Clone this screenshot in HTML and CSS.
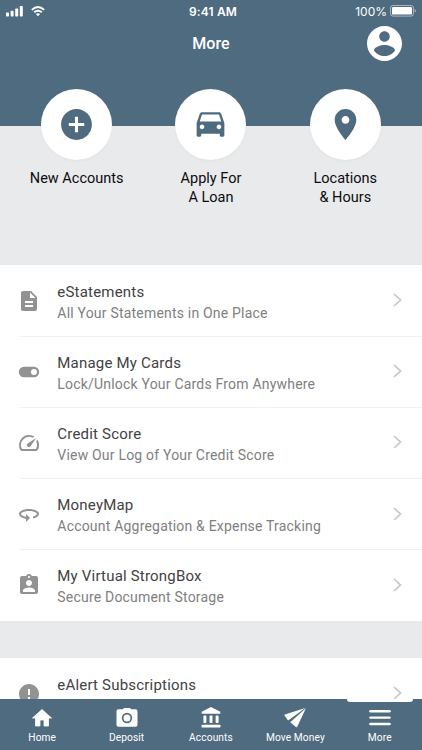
FILE: index.html
```html
<!DOCTYPE html>
<html lang="en">
<head>
<meta charset="utf-8">
<title>More</title>
<link rel="stylesheet" href="styles.css">
</head>
<body>
<div class="app">
  <header class="header">
    <div class="status">
      <div class="status-left">
        <svg width="17" height="11" viewBox="0 0 17 11"><rect x="0" y="6.5" width="3" height="4" rx=".7"/><rect x="4.6" y="4.7" width="3" height="5.8" rx=".7"/><rect x="9.2" y="2.4" width="3" height="8.1" rx=".7"/><rect x="13.8" y="0" width="3" height="10.5" rx=".7"/></svg>
        <svg width="14" height="11" viewBox="0 0 14 11"><g class="waves"><path d="M.8 3.9Q7-1.8 13.2 3.9"/><path d="M3.2 6.3Q7 3 10.8 6.3"/></g><path d="M4.9 8.1Q7 6.5 9.1 8.1L7 10.3z"/></svg>
      </div>
      <div class="clock">9:41 AM</div>
      <div class="status-right">
        <span>100%</span>
        <svg width="27" height="12" viewBox="0 0 27 12"><rect class="battery-shell" x=".5" y=".5" width="23" height="10.6" rx="2.5"/><rect x="2" y="2" width="20" height="7.6" rx="1.2"/><path class="battery-tip" d="M24.6 4c1.8.4 1.8 3.2 0 3.6z"/></svg>
      </div>
    </div>
    <h1 class="title">More</h1>
    <svg class="avatar" viewBox="2 2 20 20"><path d="M12 2C6.48 2 2 6.48 2 12s4.48 10 10 10 10-4.48 10-10S17.52 2 12 2zm0 3c1.66 0 3 1.34 3 3s-1.34 3-3 3-3-1.34-3-3 1.34-3 3-3zm0 14.2c-2.5 0-4.71-1.28-6-3.22.03-1.99 4-3.08 6-3.08 1.99 0 5.97 1.09 6 3.08-1.29 1.94-3.5 3.22-6 3.22z"/></svg>
  </header>

  <nav class="quick">
    <a class="quick-item"><span class="circle"><svg viewBox="0 0 24 24"><path d="M12 2C6.48 2 2 6.48 2 12s4.48 10 10 10 10-4.48 10-10S17.52 2 12 2zm5 11h-4v4h-2v-4H7v-2h4V7h2v4h4v2z"/></svg></span><span>New Accounts</span></a>
    <a class="quick-item"><span class="circle"><svg viewBox="0 0 24 24"><path d="M18.92 5.01C18.72 4.42 18.16 4 17.5 4h-11c-.66 0-1.21.42-1.42 1.01L3 11v8c0 .55.45 1 1 1h1c.55 0 1-.45 1-1v-1h12v1c0 .55.45 1 1 1h1c.55 0 1-.45 1-1v-8l-2.08-5.99zM6.5 15c-.83 0-1.5-.67-1.5-1.5S5.67 12 6.5 12s1.5.67 1.5 1.5S7.33 15 6.5 15zm11 0c-.83 0-1.5-.67-1.5-1.5s.67-1.5 1.5-1.5 1.5.67 1.5 1.5-.67 1.5-1.5 1.5zM5 10l1.5-4.5h11L19 10H5z"/></svg></span><span>Apply For<br>A Loan</span></a>
    <a class="quick-item"><span class="circle"><svg viewBox="0 0 24 24"><path d="M12 2C8.13 2 5 5.13 5 9c0 5.25 7 13 7 13s7-7.75 7-13c0-3.87-3.13-7-7-7zm0 9.5c-1.38 0-2.5-1.12-2.5-2.5s1.12-2.5 2.5-2.5 2.5 1.12 2.5 2.5-1.12 2.5-2.5 2.5z"/></svg></span><span>Locations<br>&amp; Hours</span></a>
  </nav>

  <main class="lists">
    <section class="list">
      <div class="row">
        <svg class="icon" viewBox="0 0 24 24"><path d="M14 2H6c-1.1 0-2 .9-2 2v16c0 1.1.89 2 1.99 2H18c1.1 0 2-.9 2-2V8l-6-6zm2 16H8v-2h8v2zm0-4H8v-2h8v2zm-3-5V3.5L18.5 9H13z"/></svg>
        <div class="text"><div class="name">eStatements</div><div class="desc">All Your Statements in One Place</div></div>
        <svg class="chevron" viewBox="0 0 9 14"><path d="M1 1l6.5 6L1 13"/></svg>
      </div>
      <div class="row">
        <svg class="icon" viewBox="0 0 24 24"><path d="M17 6.8H7a5.2 5.2 0 0 0 0 10.4h10a5.2 5.2 0 0 0 0-10.4zm0 8.2a3 3 0 1 1 0-6 3 3 0 0 1 0 6z"/></svg>
        <div class="text"><div class="name">Manage My Cards</div><div class="desc">Lock/Unlock Your Cards From Anywhere</div></div>
        <svg class="chevron" viewBox="0 0 9 14"><path d="M1 1l6.5 6L1 13"/></svg>
      </div>
      <div class="row">
        <svg class="icon" viewBox="0 0 24 24"><path d="M20.38 8.57l-1.23 1.85a8 8 0 0 1-.22 7.58H5.07A8 8 0 0 1 15.58 6.85l1.85-1.23A10 10 0 0 0 3.35 19a2 2 0 0 0 1.72 1h13.85a2 2 0 0 0 1.74-1 10 10 0 0 0-.27-10.44zM10.59 15.41a2 2 0 0 0 2.83 0l5.66-8.49-8.49 5.66a2 2 0 0 0 0 2.83z"/></svg>
        <div class="text"><div class="name">Credit Score</div><div class="desc">View Our Log of Your Credit Score</div></div>
        <svg class="chevron" viewBox="0 0 9 14"><path d="M1 1l6.5 6L1 13"/></svg>
      </div>
      <div class="row">
        <svg class="icon" viewBox="0 0 24 24"><path d="M12 7C6.48 7 2 9.24 2 12c0 2.24 2.94 4.13 7 4.77V20l4-4-4-4v2.73c-3.15-.56-5-1.9-5-2.73 0-1.06 3.04-3 8-3s8 1.94 8 3c0 .73-1.46 1.89-4 2.53v2.05c3.53-.77 6-2.53 6-4.58 0-2.76-4.48-5-10-5z"/></svg>
        <div class="text"><div class="name">MoneyMap</div><div class="desc">Account Aggregation &amp; Expense Tracking</div></div>
        <svg class="chevron" viewBox="0 0 9 14"><path d="M1 1l6.5 6L1 13"/></svg>
      </div>
      <div class="row">
        <svg class="icon" viewBox="0 0 24 24"><path d="M19 3h-4.18C14.4 1.84 13.3 1 12 1c-1.3 0-2.4.84-2.82 2H5c-1.1 0-2 .9-2 2v14c0 1.1.9 2 2 2h14c1.1 0 2-.9 2-2V5c0-1.1-.9-2-2-2zm-7 0c.55 0 1 .45 1 1s-.45 1-1 1-1-.45-1-1 .45-1 1-1zm0 4c1.66 0 3 1.34 3 3s-1.34 3-3 3-3-1.34-3-3 1.34-3 3-3zm6 12H6v-1.4c0-2 4-3.1 6-3.1s6 1.1 6 3.1V19z"/></svg>
        <div class="text"><div class="name">My Virtual StrongBox</div><div class="desc">Secure Document Storage</div></div>
        <svg class="chevron" viewBox="0 0 9 14"><path d="M1 1l6.5 6L1 13"/></svg>
      </div>
    </section>
    <section class="list">
      <div class="row">
        <svg class="icon" viewBox="0 0 24 24"><path d="M12 2C6.48 2 2 6.48 2 12s4.48 10 10 10 10-4.48 10-10S17.52 2 12 2zm1 15h-2v-2h2v2zm0-4h-2V7h2v6z"/></svg>
        <div class="text"><div class="name">eAlert Subscriptions</div><div class="desc">&nbsp;</div></div>
        <svg class="chevron" viewBox="0 0 9 14"><path d="M1 1l6.5 6L1 13"/></svg>
      </div>
    </section>
  </main>

  <nav class="tabs">
    <a class="tab"><svg viewBox="0 0 24 24"><path class="home" d="M10 20v-6h4v6h4.5v-8h3L12 3.500 2.500 12h3v8z"/></svg><span>Home</span></a>
    <a class="tab"><svg viewBox="0 0 24 24"><path fill-rule="evenodd" d="M9 2L7.800 3.200H3.500c-1.100 0-2 .900-2 2v13.600c0 1.100.900 2 2 2h17c1.100 0 2-.900 2-2V5.200c0-1.100-.900-2-2-2h-4.300L15 2H9zM12 6.800a5.200 5.200 0 1 0 0 10.400 5.200 5.200 0 0 0 0-10.400zM12 8.500a3.500 3.500 0 1 1 0 7 3.500 3.500 0 0 1 0-7z"/></svg><span>Deposit</span></a>
    <a class="tab"><svg viewBox="0 0 24 24"><path d="M12 1L2.700 5.800v2h18.600v-2z"/><rect x="4.400" y="9.600" width="3" height="7.400" rx="1"/><rect x="10.500" y="9.600" width="3" height="7.400" rx="1"/><rect x="16.600" y="9.600" width="3" height="7.400" rx="1"/><rect x="2.500" y="18.800" width="19" height="2.800" rx=".8"/></svg><span>Accounts</span></a>
    <a class="tab"><svg viewBox="0 0 24 24"><path d="M22.300 1.900L1.900 8.400c-.6.200-.7.700-.4 1.200l3.600 4.800zM22.900 2.300L14.200 20.800c-.3.600-.9.600-1.300.100l-5.700-4.700z"/></svg><span>Move Money</span></a>
    <a class="tab tab-active"><svg viewBox="0 0 24 24"><rect x="1.200" y="4" width="21.600" height="2.400" rx="1.200"/><rect x="1.200" y="10.400" width="21.600" height="2.400" rx="1.200"/><rect x="1.200" y="16.800" width="21.600" height="2.400" rx="1.200"/></svg><span>More</span></a>
  </nav>
</div>
</body>
</html>
```

FILE: styles.css
```css
* { box-sizing: border-box; }
body { margin: 0; font-family: Roboto, sans-serif; }
.app {
  width: 422px;
  height: 750px;
  overflow: hidden;
  display: flex;
  flex-direction: column;
  background: #e9eaec;
}
svg { display: block; flex: none; }

.header {
  position: relative;
  flex: none;
  height: 125.5px;
  background: #4f6b80;
  color: #fff;
  fill: #fff;
}
.status {
  display: grid;
  grid-template-columns: 1fr auto 1fr;
  align-items: center;
  height: 22px;
  padding: 0 5px 0 6px;
  font-family: Inter, sans-serif;
  font-size: 12px;
}
.status-left { display: flex; gap: 8px; }
.waves { fill: none; stroke: #fff; stroke-width: 1.9; }
.clock { font-weight: 600; letter-spacing: .15px; padding-left: 3px; }
.status-right { display: flex; justify-content: flex-end; align-items: center; gap: 3px; }
.battery-shell { fill: none; stroke: #fff; opacity: .5; }
.battery-tip { opacity: .5; }
.title {
  margin: 12px 0 0;
  text-align: center;
  font-size: 16px;
  line-height: 20px;
  font-weight: 500;
  letter-spacing: .1px;
}
.avatar { position: absolute; right: 20px; top: 25.5px; width: 35px; height: 35px; }

.quick {
  position: relative;
  flex: none;
  height: 176px;
  margin: -36.5px 9.5px 0;
  display: grid;
  grid-template-columns: repeat(3, 1fr);
  text-align: center;
  font-size: 14.5px;
  line-height: 19px;
  color: #0c0c0e;
}
.quick-item { display: flex; flex-direction: column; align-items: center; gap: 9px; }
.circle {
  width: 71px;
  height: 71px;
  border-radius: 50%;
  background: #fff;
  box-shadow: 0 1px 3px rgba(0, 0, 0, .04);
  display: flex;
  align-items: center;
  justify-content: center;
}
.circle svg { width: 37px; height: 37px; fill: #4f6b80; }

.lists { flex: 1; min-height: 0; display: flex; flex-direction: column; gap: 37px; }
.list { background: #fff; }
.row {
  position: relative;
  height: 71.2px;
  display: flex;
  align-items: center;
  padding: 0 20px 0 17px;
}
.row + .row::before {
  content: "";
  position: absolute;
  top: -.5px;
  left: 20px;
  right: 0;
  height: 1px;
  background: #f1f1f2;
}
.icon { width: 24px; height: 24px; fill: #929292; }
.text { flex: 1; margin-left: 16.3px; padding-top: 3px; white-space: nowrap; letter-spacing: .2px; }
.name { font-size: 15px; line-height: 22px; color: #424242; }
.desc { font-size: 14px; line-height: 21px; color: #808080; }
.chevron { width: 9px; height: 14px; margin-bottom: 1px; fill: none; stroke: #c5c5ca; stroke-width: 1.7; }

.tabs {
  position: relative;
  flex: none;
  height: 51px;
  background: #4f6b80;
  display: grid;
  grid-template-columns: repeat(5, 1fr);
  color: #fff;
  fill: #fff;
  font-size: 10.2px;
  line-height: 13px;
  letter-spacing: .1px;
}
.tab { position: relative; display: flex; flex-direction: column; align-items: center; gap: 1px; padding-top: 7px; }
.tab svg { width: 24px; height: 24px; }
.home { stroke: #fff; stroke-width: .8; stroke-linejoin: round; }
.tab-active::before {
  content: "";
  position: absolute;
  top: 0;
  left: 9px;
  width: 66px;
  height: 3px;
  background: #fff;
  border-radius: 0 0 3px 3px;
}
```
